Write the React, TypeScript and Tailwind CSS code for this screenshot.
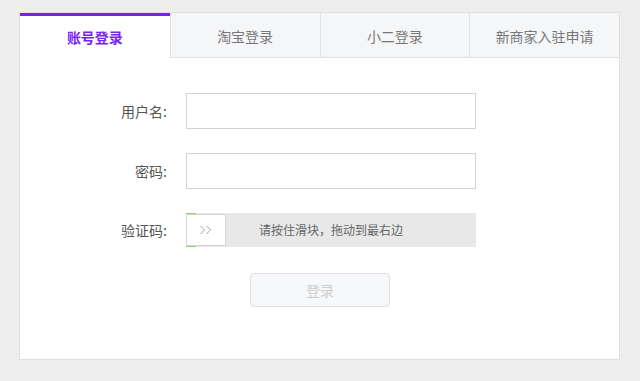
import { useState } from "react";

const tabs = ["账号登录", "淘宝登录", "小二登录", "新商家入驻申请"];

function Field({ label, type = "text" }: { label: string; type?: string }) {
  return (
    <div className="flex items-center">
      <label className="w-[148px] pr-[1px] text-right text-[14px] text-[#555]">{label}</label>
      <input
        type={type}
        className="ml-[18px] h-[36px] w-[290px] border border-[#d3d2da] bg-white px-2 text-[14px] outline-none"
      />
    </div>
  );
}

export default function App() {
  const [active, setActive] = useState(0);

  return (
    <div
      className="h-[381px] w-[640px] bg-[#eeeeee] pt-[12px] pl-[19px]"
      style={{ fontFamily: '"Noto Sans CJK SC", "Noto Sans", sans-serif' }}
    >
      <div className="h-[348px] w-[601px] border border-[#e0e0e0] bg-white">
        <div className="flex h-[45px]">
          {tabs.map((t, i) => (
            <button
              key={t}
              onClick={() => setActive(i)}
              className={
                i === active
                  ? "flex w-[150px] items-center justify-center border-t-[3px] border-[#7a1ff5] bg-white text-[14px] font-bold text-[#7a1ff5]"
                  : "flex w-[150px] items-center justify-center border-b border-l border-[#e2e2e6] bg-[#f5f6f8] pt-[2px] text-[14px] text-[#777]"
              }
            >
              {t}
            </button>
          ))}
        </div>

        <div className="flex flex-col gap-[24px] pt-[35px]">
          <Field label="用户名:" />
          <Field label="密码:" type="password" />

          <div className="flex items-center">
            <span className="w-[148px] pr-[1px] text-right text-[14px] text-[#555]">验证码:</span>
            <div className="relative ml-[18px] flex h-[34px] w-[290px] items-center justify-center bg-[#e8e8e8]">
              <div className="absolute top-0 bottom-0 left-0 w-[10px] bg-[#8fd16a]" />
              <div className="absolute top-[1px] bottom-[1px] left-0 flex w-[40px] items-center justify-center border border-[#d6d6d6] bg-white">
                <svg width="14" height="10" viewBox="0 0 14 10" fill="none" stroke="#999" strokeWidth="0.9">
                  <path d="M1.5 1 L5.5 5 L1.5 9" />
                  <path d="M7.5 1 L11.5 5 L7.5 9" />
                </svg>
              </div>
              <span className="text-[12px] text-[#666]">请按住滑块，拖动到最右边</span>
            </div>
          </div>

          <div className="flex pt-[2px]">
            <button className="ml-[230px] h-[34px] w-[140px] rounded-[4px] border border-[#e0e0e6] bg-[#f7f8fa] text-[14px] text-[#ccc]">
              登录
            </button>
          </div>
        </div>
      </div>
    </div>
  );
}
